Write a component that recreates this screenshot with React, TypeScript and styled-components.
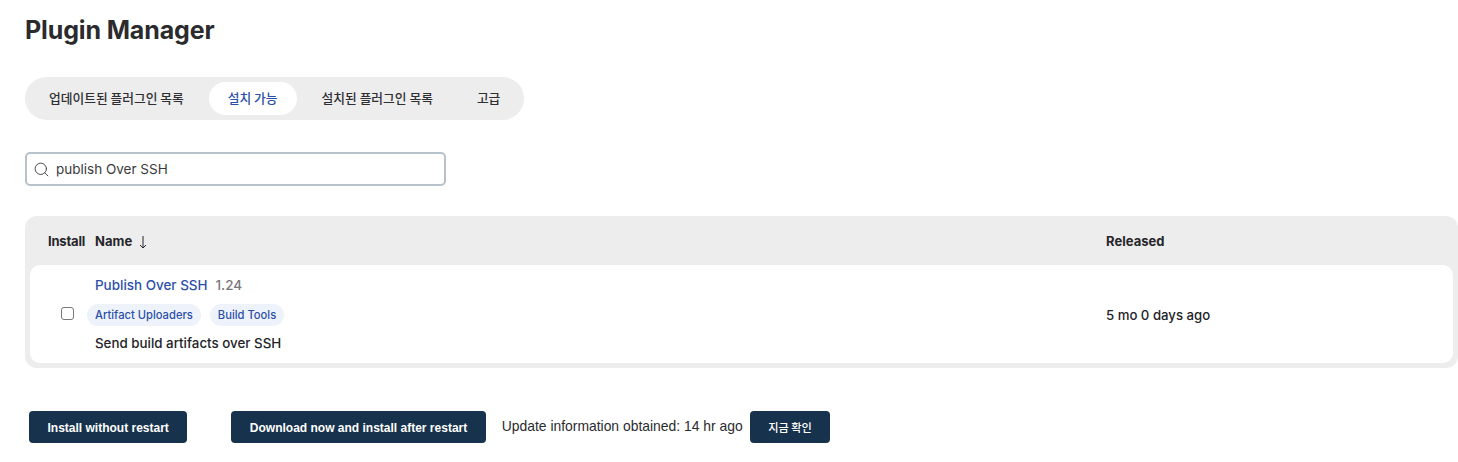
import React from "react";
import styled, { createGlobalStyle } from "styled-components";
import { Search } from "lucide-react";

const GlobalStyle = createGlobalStyle`
  html, body {
    margin: 0;
    padding: 0;
    background: #fff;
    overflow: hidden;
  }
  body {
    font-family: "Inter", "Liberation Sans", "Noto Sans CJK KR", sans-serif;
    color: #14141f;
  }
`;

const Page = styled.div`
  width: 1458px;
  height: 462px;
  box-sizing: border-box;
  padding: 14px 0 0 25px;
`;

const Title = styled.h1`
  margin: 0;
  font-size: 25px;
  line-height: 32px;
  font-weight: 700;
  color: #2b2b2e;
  letter-spacing: -0.13px;
`;

const TabBar = styled.div`
  display: inline-flex;
  align-items: center;
  gap: 6px;
  height: 43px;
  margin-top: 31px;
  padding: 0 5px;
  border-radius: 22px;
  background: #ededed;
`;

const Tab = styled.div<{ $active?: boolean }>`
  display: flex;
  align-items: center;
  height: 33px;
  padding: 0 19px 2px;
  box-sizing: border-box;
  border-radius: 17px;
  font-family: "Noto Sans CJK KR", sans-serif;
  font-size: 12.75px;
  font-weight: 500;
  color: ${(props) => (props.$active ? "#2c4fa8" : "#2f2f33")};
  background: ${(props) => (props.$active ? "#fff" : "transparent")};
`;

const SearchBox = styled.div`
  display: flex;
  align-items: center;
  gap: 6px;
  box-sizing: border-box;
  width: 421px;
  height: 34px;
  margin-top: 32px;
  padding: 0 6px;
  border: 2px solid #b7c2ca;
  border-radius: 5px;
  font-size: 13.5px;
  color: #3a3a3e;

  svg {
    color: #4a4a4e;
  }
`;

const Table = styled.div`
  width: 1433px;
  box-sizing: border-box;
  margin-top: 30px;
  padding: 0 5px 5px;
  border-radius: 12px;
  background: #ededed;
`;

const HeaderRow = styled.div`
  display: grid;
  grid-template-columns: 65px 1011px 1fr;
  align-items: center;
  height: 49px;
  font-size: 13px;
  font-weight: 700;
  color: #26262a;
`;

const HeaderCell = styled.div<{ $indent?: number; $squeeze?: boolean }>`
  display: flex;
  align-items: center;
  gap: 6px;
  padding-left: ${(props) => props.$indent ?? 0}px;
  letter-spacing: ${(props) => (props.$squeeze ? "-0.2px" : "0.03px")};
`;

const Arrow = styled.svg`
  width: 10px;
  height: 14px;
  margin-top: 2px;
`;

const BodyRow = styled.div`
  display: grid;
  grid-template-columns: 57px 1019px 1fr;
  align-items: center;
  height: 98px;
  border-radius: 10px;
  background: #fff;
`;

const CheckCell = styled.div`
  display: flex;
  justify-content: flex-end;
  padding: 0 13px 2px 0;
`;

const CheckBox = styled.span`
  display: block;
  width: 13px;
  height: 13px;
  box-sizing: border-box;
  border: 1.5px solid #77777c;
  border-radius: 3px;
  background: #fff;
`;

const PluginCell = styled.div`
  display: flex;
  flex-direction: column;
  padding-bottom: 2px;
`;

const NameLine = styled.div`
  display: flex;
  align-items: baseline;
  gap: 8px;
  padding-left: 8px;
  font-size: 13.45px;
  line-height: 20px;
`;

const PluginLink = styled.span`
  font-weight: 500;
  color: #2c4fa8;
`;

const Version = styled.span`
  font-weight: 500;
  color: #77777c;
`;

const Labels = styled.div`
  display: flex;
  gap: 9px;
  margin-top: 9px;
`;

const Label = styled.span`
  display: flex;
  align-items: center;
  height: 22px;
  padding: 1px 8px 0;
  box-sizing: border-box;
  border-radius: 11px;
  background: #eef3fb;
  font-size: 11.2px;
  font-weight: 500;
  color: #2c4fa8;
`;

const Excerpt = styled.div`
  margin-top: 8px;
  padding-left: 8px;
  font-size: 13.35px;
  line-height: 18px;
  font-weight: 500;
  color: #232327;
`;

const Released = styled.div`
  padding-top: 1px;
  font-size: 13.2px;
  font-weight: 500;
  color: #232327;
`;

const Footer = styled.div`
  display: flex;
  align-items: center;
  height: 32px;
  margin-top: 43px;
  padding-left: 4px;
`;

const Button = styled.button<{ $gap?: number }>`
  height: 32px;
  margin-left: ${(props) => props.$gap ?? 0}px;
  padding: 1px 18.5px 0;
  border: none;
  border-radius: 4px;
  background: #17324c;
  font-family: "Liberation Sans", sans-serif;
  font-size: 12px;
  font-weight: 700;
  color: #fff;
`;

const KoreanButton = styled(Button)`
  padding: 0 18.5px;
  font-family: "Noto Sans CJK KR", sans-serif;
  font-size: 11.2px;
  font-weight: 500;
`;

const UpdateInfo = styled.span`
  margin: -2px 0 0 16px;
  font-family: "Liberation Sans", sans-serif;
  font-size: 13.9px;
  color: #2b2b2e;
`;

export default function App() {
  return (
    <>
      <GlobalStyle />
      <Page>
        <Title>Plugin Manager</Title>
        <TabBar>
          <Tab>업데이트된 플러그인 목록</Tab>
          <Tab $active>설치 가능</Tab>
          <Tab>설치된 플러그인 목록</Tab>
          <Tab>고급</Tab>
        </TabBar>
        <SearchBox>
          <Search size={17} strokeWidth={1.4} />
          publish Over SSH
        </SearchBox>
        <Table>
          <HeaderRow>
            <HeaderCell $indent={18} $squeeze>Install</HeaderCell>
            <HeaderCell>
              Name
              <Arrow viewBox="0 0 10 14" fill="none" stroke="#26262a" strokeWidth="1">
                <path d="M5 1v12M2 10l3 3 3-3" />
              </Arrow>
            </HeaderCell>
            <HeaderCell>Released</HeaderCell>
          </HeaderRow>
          <BodyRow>
            <CheckCell>
              <CheckBox />
            </CheckCell>
            <PluginCell>
              <NameLine>
                <PluginLink>Publish Over SSH</PluginLink>
                <Version>1.24</Version>
              </NameLine>
              <Labels>
                <Label>Artifact Uploaders</Label>
                <Label>Build Tools</Label>
              </Labels>
              <Excerpt>Send build artifacts over SSH</Excerpt>
            </PluginCell>
            <Released>5 mo 0 days ago</Released>
          </BodyRow>
        </Table>
        <Footer>
          <Button>Install without restart</Button>
          <Button $gap={44}>Download now and install after restart</Button>
          <UpdateInfo>Update information obtained: 14 hr ago</UpdateInfo>
          <KoreanButton $gap={7}>지금 확인</KoreanButton>
        </Footer>
      </Page>
    </>
  );
}
